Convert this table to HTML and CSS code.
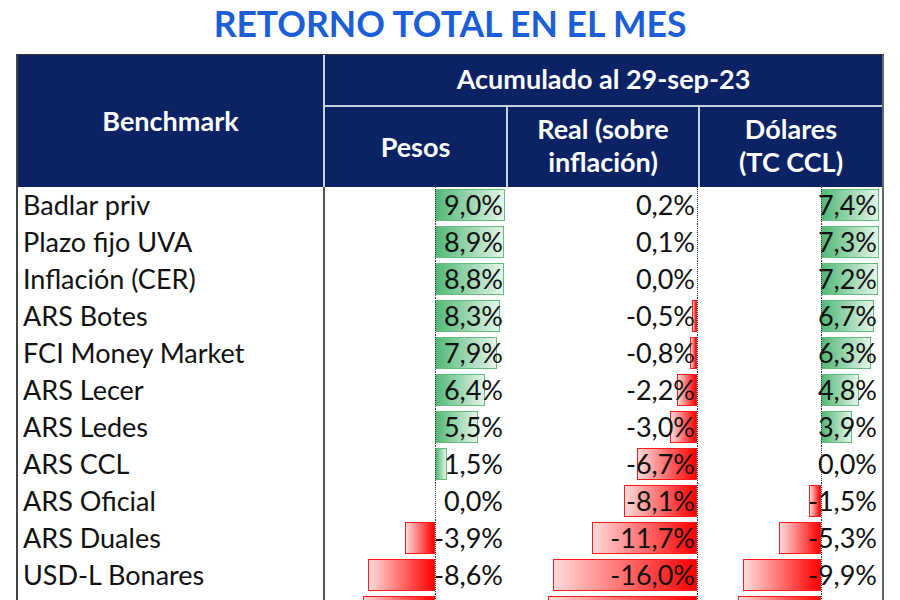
FILE: index.html
```html
<!DOCTYPE html>
<html lang="es">
<head>
<meta charset="utf-8">
<title>Retorno total en el mes</title>
<link rel="stylesheet" href="styles.css">
</head>
<body>
<h1 class="title">RETORNO TOTAL EN EL MES</h1>
<div class="table">
  <div class="head">
    <div class="h-bench">Benchmark</div>
    <div class="h-group">Acumulado al 29-sep-23</div>
    <div class="h-col h-pesos">Pesos</div>
    <div class="h-col h-real">Real (sobre<br>inflación)</div>
    <div class="h-col h-usd">Dólares<br>(TC CCL)</div>
  </div>
  <div class="body" id="rows"></div>
</div>
<script src="app.js"></script>
</body>
</html>
```
FILE: styles.css
```css
* { box-sizing: border-box; }
html, body { margin: 0; padding: 0; background: #fff; }
body {
  font-family: Lato, "Open Sans", "Liberation Sans", sans-serif;
  width: 900px;
  height: 600px;
  overflow: hidden;
}
.title {
  margin: 0;
  height: 54px;
  padding-top: 3px;
  text-align: center;
  font-size: 35.5px;
  line-height: 42px;
  font-weight: 700;
  color: #1b5ed6;
}
.table {
  margin-left: 16px;
  width: 868px;
  border-left: 2px solid #444;
  border-right: 2px solid #666;
  border-top: 1px solid #333;
}
.head {
  display: grid;
  grid-template-columns: 307px 183px 192px 182px;
  grid-template-rows: 52px 80px;
  background: #0b2265;
  color: #fff;
  font-weight: 700;
  font-size: 27px;
}
.h-bench {
  grid-row: 1 / span 2;
  grid-column: 1;
  display: flex;
  align-items: center;
  justify-content: center;
  padding-bottom: 2px;
  border-right: 2px solid #c9d1e3;
}
.h-group {
  grid-column: 2 / span 3;
  grid-row: 1;
  display: flex;
  align-items: center;
  justify-content: center;
  border-bottom: 2px solid #c9d1e3;
  padding-bottom: 4px;
}
.h-col {
  grid-row: 2;
  display: flex;
  align-items: center;
  justify-content: center;
  text-align: center;
  line-height: 33px;
  padding-bottom: 4px;
}
.h-pesos { grid-column: 2; border-right: 2px solid #c9d1e3; padding-top: 2px; }
.h-real { grid-column: 3; border-right: 2px solid #c9d1e3; }
.h-usd { grid-column: 4; }

.row {
  display: grid;
  grid-template-columns: 307px 183px 192px 182px;
  height: 37px;
  font-size: 27px;
  color: #111;
}
.name {
  padding-left: 5px;
  line-height: 36px;
  border-right: 2px solid #555;
  white-space: nowrap;
}
.val {
  position: relative;
  text-align: right;
  line-height: 36px;
  padding-right: 5px;
  white-space: nowrap;
}
.val span { position: relative; z-index: 2; }
.val::before {
  content: "";
  position: absolute;
  top: 0;
  bottom: 0;
  left: var(--axis);
  border-left: 1px dotted #333;
  z-index: 3;
}
.c-pesos { --axis: 110px; }
.c-real { --axis: 189px; }
.c-usd { --axis: 121px; }
.bar {
  position: absolute;
  top: 2px;
  height: 32px;
  z-index: 1;
}
.bar.pos {
  background: linear-gradient(to right, #52b877, #e4f4e9);
  border: 1px solid #63be7b;
}
.bar.neg {
  background: linear-gradient(to left, #ff0000, #ffdada);
  border: 1px solid #ff1a1a;
}
```
FILE: app.js
```javascript
const data = [
  ["Badlar priv", 9.0, 0.2, 7.4],
  ["Plazo fijo UVA", 8.9, 0.1, 7.3],
  ["Inflación (CER)", 8.8, 0.0, 7.2],
  ["ARS Botes", 8.3, -0.5, 6.7],
  ["FCI Money Market", 7.9, -0.8, 6.3],
  ["ARS Lecer", 6.4, -2.2, 4.8],
  ["ARS Ledes", 5.5, -3.0, 3.9],
  ["ARS CCL", 1.5, -6.7, 0.0],
  ["ARS Oficial", 0.0, -8.1, -1.5],
  ["ARS Duales", -3.9, -11.7, -5.3],
  ["USD-L Bonares", -8.6, -16.0, -9.9],
  [null, -9.2, -16.6, -10.5]
];
const cols = [
  { cls: "c-pesos", axis: 110, width: 183, scale: 7.8 },
  { cls: "c-real", axis: 189, width: 192, scale: 9.0 },
  { cls: "c-usd", axis: 121, width: 182, scale: 7.9 }
];
const fmt = v => v.toFixed(1).replace(".", ",") + "%";
const rows = document.getElementById("rows");
data.forEach(d => {
  const partial = d[0] === null;
  const row = document.createElement("div");
  row.className = "row";
  const n = document.createElement("div");
  n.className = "name";
  if (!partial) n.textContent = d[0];
  row.appendChild(n);
  cols.forEach((c, i) => {
    const v = d[i + 1];
    const cell = document.createElement("div");
    cell.className = "val " + c.cls;
    const w = Math.abs(v) * c.scale;
    if (w >= 2) {
      const b = document.createElement("div");
      b.className = "bar " + (v > 0 ? "pos" : "neg");
      if (v > 0) {
        b.style.left = c.axis + "px";
      } else {
        b.style.right = (c.width - c.axis) + "px";
      }
      b.style.width = Math.round(w) + "px";
      cell.appendChild(b);
    }
    if (!partial) {
      const s = document.createElement("span");
      s.textContent = fmt(v);
      cell.appendChild(s);
    }
    row.appendChild(cell);
  });
  rows.appendChild(row);
});
```
